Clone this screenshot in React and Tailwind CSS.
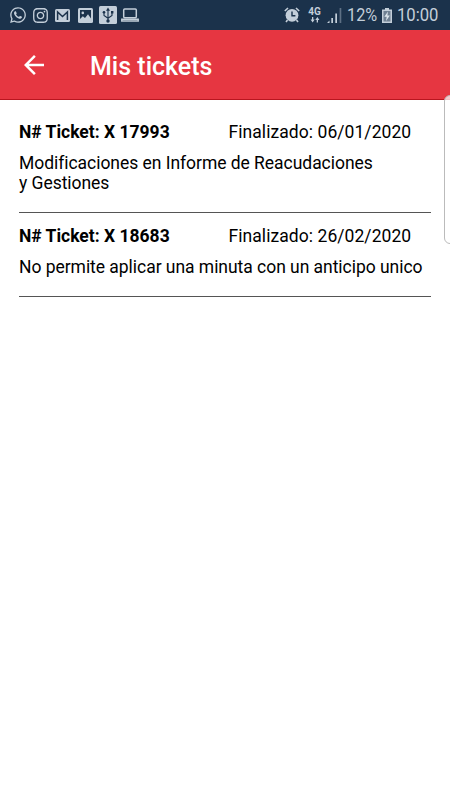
import { FaWhatsapp, FaInstagram } from 'react-icons/fa';
import { MdArrowBack } from 'react-icons/md';

const TICKETS = [
    { id: 'X 17993', date: '06/01/2020', desc: ['Modificaciones en Informe de Reacudaciones', 'y Gestiones'] },
    { id: 'X 18683', date: '26/02/2020', desc: ['No permite aplicar una minuta con un anticipo unico'] },
];

function MailIcon() {
    return (
        <svg width="15" height="13" viewBox="0 0 15 13">
            <rect width="15" height="13" rx="1.5" fill="currentColor" />
            <path d="M2.6 11V3l4.900 4.500L12.400 3v8" fill="none" stroke="#1b324b" strokeWidth="1.5" />
        </svg>
    );
}

function PictureIcon() {
    return (
        <svg width="15" height="15" viewBox="0 0 15 15">
            <rect width="15" height="15" rx="1.5" fill="currentColor" />
            <path d="M2 2h11v8.500L10 6.300 7 10 4.800 8.300 2 11z" fill="#1b324b" />
            <circle cx="4.8" cy="4.9" r="1.3" fill="currentColor" />
        </svg>
    );
}

function UsbIcon() {
    return (
        <svg width="18" height="18" viewBox="0 0 18 18">
            <rect width="18" height="18" rx="1.5" fill="currentColor" />
            <path d="M9 3v12M5 6.500v3L9 12.300l4-2.800v-3" fill="none" stroke="#1b324b" strokeWidth="1.1" />
            <path d="M9 1.500 11 4.700H7zM12 5h2.400v2.400H12z" fill="#1b324b" />
            <circle cx="5" cy="6.3" r="1.3" fill="#1b324b" />
            <circle cx="9" cy="15" r="1.7" fill="#1b324b" />
        </svg>
    );
}

function LaptopIcon() {
    return (
        <svg width="18" height="14" viewBox="0 0 18 14" fill="none" stroke="currentColor" strokeWidth="1.5">
            <rect x="2.7" y="1" width="12.6" height="8.7" rx="1" />
            <path d="M.8 11.300h16.400v1.700H.8z" />
        </svg>
    );
}

function AlarmIcon() {
    return (
        <svg width="16" height="16" viewBox="0 0 16 16">
            <circle cx="8" cy="8.3" r="6.4" fill="currentColor" />
            <path d="M.8 4 4 1M12 1l3.200 3M3.500 13 2 15M12.500 13l1.500 2" stroke="currentColor" strokeWidth="1.6" />
            <path d="M8 4.500v4.200h3.400" fill="none" stroke="#1b324b" strokeWidth="1.4" />
        </svg>
    );
}

function SignalIcon() {
    return (
        <svg width="15" height="15" viewBox="0 0 15 15" fill="currentColor">
            <path d="M0 15l2.500-2.500V15zM4.300 10H6v5H4.300zM8.300 5.500H10V15H8.300z" />
            <path d="M12.600 0h1.700v15h-1.700z" opacity=".4" />
        </svg>
    );
}

function BatteryIcon() {
    return (
        <svg width="10" height="15" viewBox="0 0 10 15">
            <path d="M3 0h4v1.500h3V15H0V1.500h3z" fill="currentColor" />
            <path d="M1.500 3h7v10.500h-7z" fill="#1b324b" opacity=".5" />
            <path d="M6 3.500 2.300 8.700h2.400L4 13l3.800-5.600H5.400z" fill="#dce5ec" />
        </svg>
    );
}

function NetworkIcon() {
    return (
        <div className="flex w-[13px] flex-col items-center">
            <span className="text-[10px] leading-[10px] font-bold">4G</span>
            <svg width="10" height="6" viewBox="0 0 10 6" fill="currentColor">
                <path d="M2 0h1.300v2.500h1.400L2.650 5.500.6 2.500H2zM6.700 5.500H8V3h1.400L7.350 0 5.300 3h1.400z" />
            </svg>
        </div>
    );
}

function StatusBar() {
    return (
        <div className="flex h-[30px] items-center justify-between bg-[#1b324b] pl-[9px] pr-[11px] text-[#c3ced9]">
            <div className="flex items-center">
                <FaWhatsapp className="size-[18px]" />
                <FaInstagram className="ml-[5px] size-[17px]" />
                <span className="ml-[6px]"><MailIcon /></span>
                <span className="ml-[8px]"><PictureIcon /></span>
                <span className="ml-[6px]"><UsbIcon /></span>
                <span className="ml-[4px]"><LaptopIcon /></span>
            </div>
            <div className="flex items-center">
                <AlarmIcon />
                <span className="ml-[8px]"><NetworkIcon /></span>
                <span className="ml-[6px]"><SignalIcon /></span>
                <span className="ml-[5px] w-[31px] text-[18.5px] leading-[30px]">
                    <span className="inline-block origin-left scale-x-[0.88]">12%</span>
                </span>
                <span className="ml-[4px]"><BatteryIcon /></span>
                <span className="ml-[5px] w-[42px] text-[18.5px] leading-[30px]">
                    <span className="inline-block origin-left scale-x-[0.9]">10:00</span>
                </span>
            </div>
        </div>
    );
}

function Ticket({ ticket }) {
    return (
        <div className="mx-[19px] border-b border-[#555] pt-[13.5px] pb-[18px] text-[17.5px] leading-[20.5px]">
            <div className="flex">
                <span className="w-[209.5px] font-bold">N# Ticket: {ticket.id}</span>
                <span className="tracking-[0.06px]">Finalizado: {ticket.date}</span>
            </div>
            <div className="mt-[10.5px] tracking-[-0.04px]">
                {ticket.desc.map((line) => (
                    <p key={line} className="whitespace-nowrap">{line}</p>
                ))}
            </div>
        </div>
    );
}

export default function App() {
    return (
        <div className="relative h-[800px] w-[450px] overflow-hidden bg-white font-['Roboto',sans-serif] text-black">
            <StatusBar />
            <header className="flex h-[70px] items-center border-b border-[#b9151f] bg-[#e63641] text-white">
                <MdArrowBack className="ml-[19px] size-[30px]" />
                <h1 className="ml-[41px] pt-[4px] text-[25px] font-medium">Mis tickets</h1>
            </header>
            <main className="pt-[8px]">
                {TICKETS.map((ticket) => (
                    <Ticket key={ticket.id} ticket={ticket} />
                ))}
            </main>
            {/* edge panel handle */}
            <div className="absolute top-[95px] -right-[6px] h-[149px] w-[12px] rounded-[6px] border border-[#bbb] bg-white/75" />
        </div>
    );
}
